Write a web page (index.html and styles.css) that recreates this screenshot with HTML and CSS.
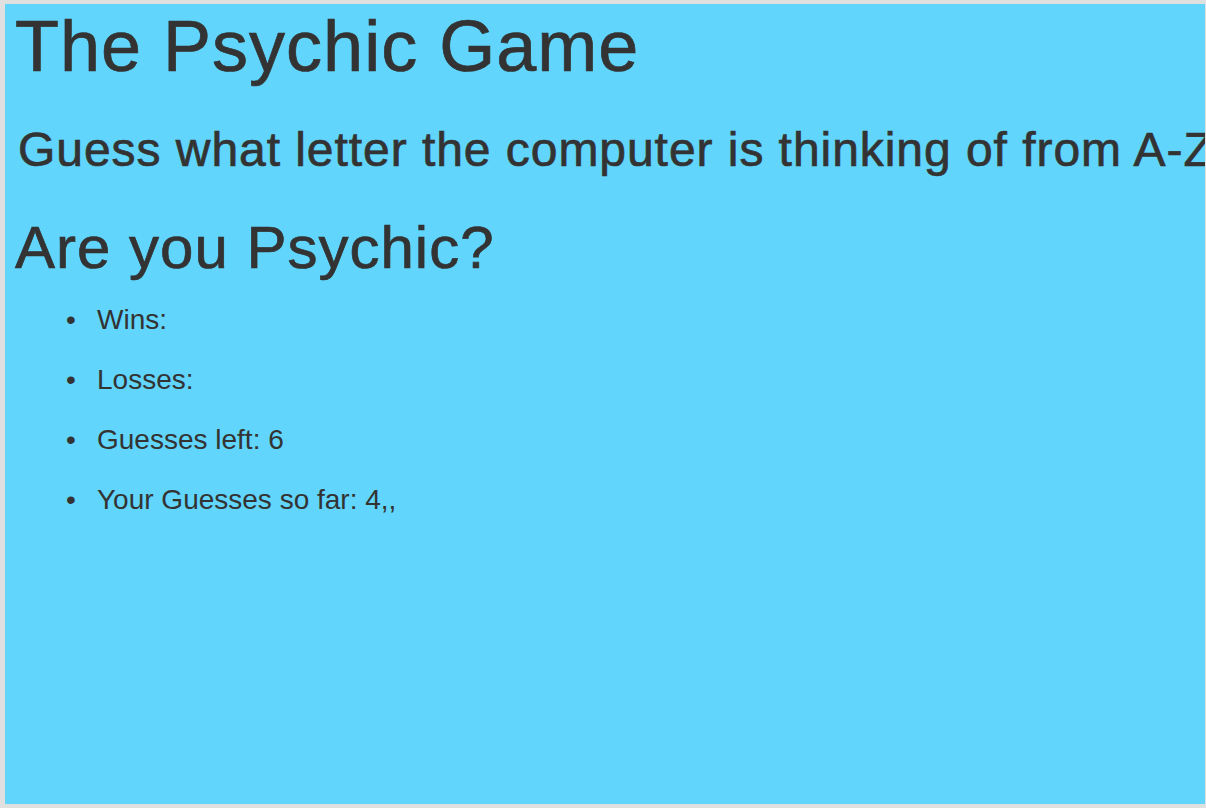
FILE: index.html
```html
<!DOCTYPE html>
<html lang="en">
<head>
<meta charset="utf-8">
<title>The Psychic Game</title>
<link rel="stylesheet" href="styles.css">
</head>
<body>
<div class="page">
  <h1 class="title">The Psychic Game</h1>
  <h3 class="subtitle">Guess what letter the computer is thinking of from A-Z</h3>
  <h2 class="question">Are you Psychic?</h2>
  <ul class="stats">
    <li>Wins: </li>
    <li>Losses: </li>
    <li>Guesses left: 6</li>
    <li>Your Guesses so far: 4,,</li>
  </ul>
</div>
</body>
</html>
```
FILE: styles.css
```css
html, body {
  margin: 0;
  padding: 0;
}
body {
  background: #e0e0e0;
  padding: 4px 1px 4px 5px;
  font-family: "Liberation Sans", Arial, Helvetica, sans-serif;
  color: #333333;
  font-size: 28px;
  line-height: 40px;
}
.page {
  background: #61d5fb;
  height: 800px;
  overflow: hidden;
  padding: 3px 0 0 10px;
  box-sizing: border-box;
}
.title,
.subtitle,
.question {
  font-weight: 400;
  line-height: 1.1;
  -webkit-text-stroke: 0.7px #333333;
}
.title {
  font-size: 72px;
  letter-spacing: 1px;
  margin: 0 0 38px;
}
.subtitle {
  font-size: 48px;
  letter-spacing: 0.95px;
  margin: 0 0 38px 3px;
  white-space: nowrap;
}
.question {
  font-size: 60px;
  letter-spacing: 1px;
  margin: 0 0 19px;
}
.stats {
  margin: 0;
  padding-left: 82px;
}
.stats li {
  margin-bottom: 20px;
}
.stats li::marker {
  content: "\2022\00a0\00a0\2009";
}
```
